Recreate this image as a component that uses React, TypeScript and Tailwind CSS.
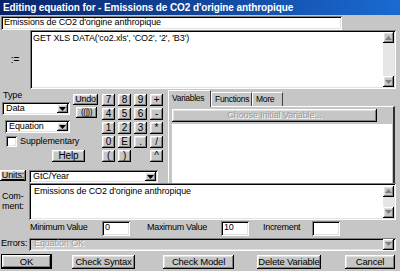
import React from 'react';

const raised =
  'bg-[#c6c6c6] shadow-[inset_-1px_-1px_#000,inset_1px_1px_#fff,inset_-2px_-2px_#808080,inset_2px_2px_#e2e2e2]';
const sunken =
  'shadow-[inset_1px_1px_#808080,inset_-1px_-1px_#fff,inset_2px_2px_#000,inset_-2px_-2px_#e2e2e2]';

const Arrow = ({ up = false, gray = false }: { up?: boolean; gray?: boolean }) => (
  <svg width="7" height="4" viewBox="0 0 7 4">
    <path d={up ? 'M3.5 0 L7 4 L0 4 Z' : 'M0 0 L7 0 L3.5 4 Z'} fill={gray ? '#808080' : '#000'} />
  </svg>
);

const ScrollBtn = ({ up }: { up?: boolean }) => (
  <div className={`${raised} shrink-0 w-[11px] h-[11px] flex items-center justify-center`}>
    <Arrow up={up} gray />
  </div>
);

const ScrollBar = () => (
  <div className="w-[11px] h-full shrink-0 flex flex-col bg-[#e6e6e6]">
    <ScrollBtn up />
    <div className="flex-1" />
    <ScrollBtn />
  </div>
);

const Dropdown = ({ label, className }: { label: string; className: string }) => (
  <div className={`${sunken} shrink-0 bg-white flex items-center p-[2px] ${className}`}>
    <span className="flex-1 pl-[2px] leading-none">{label}</span>
    <div className={`${raised} w-[11px] h-full flex items-center justify-center`}>
      <Arrow />
    </div>
  </div>
);

const Btn = ({ children, className = '' }: { children: React.ReactNode; className?: string }) => (
  <div className={`${raised} shrink-0 whitespace-nowrap flex items-center justify-center leading-none ${className}`}>
    {children}
  </div>
);

const keys = ['7', '8', '9', '+', '4', '5', '6', '-', '1', '2', '3', '*', '0', 'E', '.', '/', '(', ')', '', '^'];

export default function App() {
  return (
    <div className="w-[400px] h-[271px] overflow-hidden bg-[#c6c6c6] flex flex-col text-[9px] tracking-[-0.1px] text-black font-['Liberation_Sans',Arial,sans-serif]">
      {/* title bar */}
      <div className="h-[15px] shrink-0 flex items-center pl-[3px] bg-gradient-to-r from-[#0a246a] to-[#1a6ad2] text-white font-bold text-[10px] tracking-[-0.1px]">
        Editing equation for - Emissions de CO2 d'origine anthropique
      </div>

      {/* name */}
      <div className="h-[15px] shrink-0 pt-[1px] pl-[1px]">
        <div className={`${sunken} bg-white w-[341px] h-[14px] flex items-center pl-[3px]`}>
          Emissions de CO2 d'origine anthropique
        </div>
      </div>

      {/* equation */}
      <div className="h-[59px] shrink-0 flex">
        <div className="w-[30px] shrink-0 flex items-center justify-center text-[10px]">:=</div>
        <div className={`${sunken} bg-white w-[366px] shrink-0 flex p-[2px]`}>
          <div className="flex-1 pl-[1px] pt-[1px] leading-[11px]">GET XLS DATA('co2.xls', 'CO2', '2', 'B3')</div>
          <ScrollBar />
        </div>
      </div>

      {/* middle */}
      <div className="h-[94px] shrink-0 flex">
        <div className="w-[168px] shrink-0 flex flex-col">
          <div className="flex h-[75px]">
            <div className="w-[101px] shrink-0 flex flex-col">
              <div className="flex">
                <div className="w-[72px] shrink-0 flex flex-col">
                  <div className="h-[13px] pl-[3px] pt-[2px] leading-none">Type</div>
                  <Dropdown label="Data" className="ml-[2px] w-[68px] h-[13px]" />
                  <Dropdown label="Equation" className="ml-[5px] mt-[5px] w-[65px] h-[13px]" />
                  <div className="flex items-center mt-[3px] ml-[6px] h-[11px] whitespace-nowrap">
                    <div className={`${sunken} shrink-0 bg-white w-[11px] h-[11px]`} />
                    <span className="ml-[3px] leading-none">Supplementary</span>
                  </div>
                </div>
                <div className="flex flex-col">
                  <Btn className="mt-[5px] ml-[1px] w-[25px] h-[11px] text-[9px] tracking-[-0.2px]">Undo</Btn>
                  <Btn className="mt-[2px] ml-[4px] w-[21px] h-[11px] text-[8.5px] tracking-[-0.5px]">((|))</Btn>
                </div>
              </div>
              <Btn className="mt-[3px] ml-[52px] w-[33px] h-[12px] text-[10px]">Help</Btn>
            </div>
            <div className="mt-[5px] ml-[1px] grid grid-cols-[13px_13px_13px_13px] auto-rows-[12px] gap-x-[3px] gap-y-[2px]">
              {keys.map((k, i) =>
                k === '' ? (
                  <div key={i} />
                ) : (
                  <Btn key={i} className="text-[10px]">{k}</Btn>
                ),
              )}
            </div>
          </div>
          <div className="flex mt-[6px] items-start">
            <Btn className="w-[26px] h-[11px] underline">Units:</Btn>
            <Dropdown label="GtC/Year" className="ml-[3px] w-[129px] h-[13px]" />
          </div>
        </div>

        {/* tabs */}
        <div className="w-[227px] shrink-0 flex flex-col">
          <div className="h-[17px] flex items-end whitespace-nowrap text-[8.5px] tracking-[-0.3px]">
            <div className="h-[17px] w-[43px] pl-[3px] pt-[3px] border-t border-l border-white border-r border-r-[#404040] bg-[#c6c6c6] relative z-10 -mb-[1px] leading-none">
              Variables
            </div>
            <div className="h-[14px] w-[41px] pl-[3px] pt-[2px] border-t border-l border-white border-r border-r-[#404040] leading-none">
              Functions
            </div>
            <div className="h-[14px] w-[31px] pl-[3px] pt-[2px] border-t border-l border-white border-r border-r-[#404040] leading-none">
              More
            </div>
          </div>
          <div className="flex-1 border-t border-l border-white border-r-2 border-r-[#303030] flex flex-col pl-[3px] pr-[1px] pt-[2px]">
            <Btn className="w-[205px] h-[13px] text-[#9a9a9a] [text-shadow:1px_1px_#fff]">Choose Initial Variable...</Btn>
            <div className="mt-[2px] flex-1 bg-white" />
          </div>
        </div>
      </div>

      {/* comment */}
      <div className="h-[37px] shrink-0 flex">
        <div className="w-[29px] shrink-0 pl-[2px] pt-[8px] leading-[10px]">
          Com-
          <br />
          ment:
        </div>
        <div className={`${sunken} bg-white w-[367px] shrink-0 flex p-[2px]`}>
          <div className="flex-1 pl-[3px] pt-[1px] leading-[11px]">Emissions de CO2 d'origine anthropique</div>
          <div className="h-[32px] self-center">
            <ScrollBar />
          </div>
        </div>
      </div>

      {/* min/max */}
      <div className="h-[16px] shrink-0 flex items-center tracking-[-0.3px] whitespace-nowrap">
        <span className="ml-[30px] w-[72px] shrink-0">Minimum Value</span>
        <div className={`${sunken} shrink-0 bg-white w-[28px] h-[15px] flex items-center pl-[3px]`}>0</div>
        <span className="ml-[17px] w-[74px] shrink-0">Maximum Value</span>
        <div className={`${sunken} shrink-0 bg-white w-[28px] h-[15px] flex items-center pl-[3px]`}>10</div>
        <span className="ml-[14px] w-[49px] shrink-0">Increment</span>
        <div className={`${sunken} shrink-0 bg-white w-[28px] h-[15px]`} />
      </div>

      {/* errors */}
      <div className="h-[14px] shrink-0 mt-[1px] flex items-center">
        <span className="w-[29px] shrink-0 pl-[1px]">Errors:</span>
        <div className={`${sunken} shrink-0 bg-[#cacaca] w-[367px] h-[13px] flex items-center p-[2px]`}>
          <span className="flex-1 pl-[3px] text-[#a0a0a0] [text-shadow:1px_1px_#fff]">Equation OK</span>
          <div className="h-[9px] w-[11px] flex items-center">
            <ScrollBtn />
          </div>
        </div>
      </div>

      {/* buttons */}
      <div className="h-[15px] shrink-0 mt-[3px] flex items-center text-[9.5px] tracking-[-0.2px]">
        <div className="ml-[1px] w-[51px] h-[15px] shrink-0 border border-black">
          <Btn className="w-full h-full">OK</Btn>
        </div>
        <Btn className="ml-[20px] w-[63px] h-[14px]">Check Syntax</Btn>
        <Btn className="ml-[28px] w-[71px] h-[14px]">Check Model</Btn>
        <Btn className="ml-[23px] w-[64px] h-[14px]">Delete Variable</Btn>
        <Btn className="ml-[24px] w-[50px] h-[14px]">Cancel</Btn>
      </div>
    </div>
  );
}
